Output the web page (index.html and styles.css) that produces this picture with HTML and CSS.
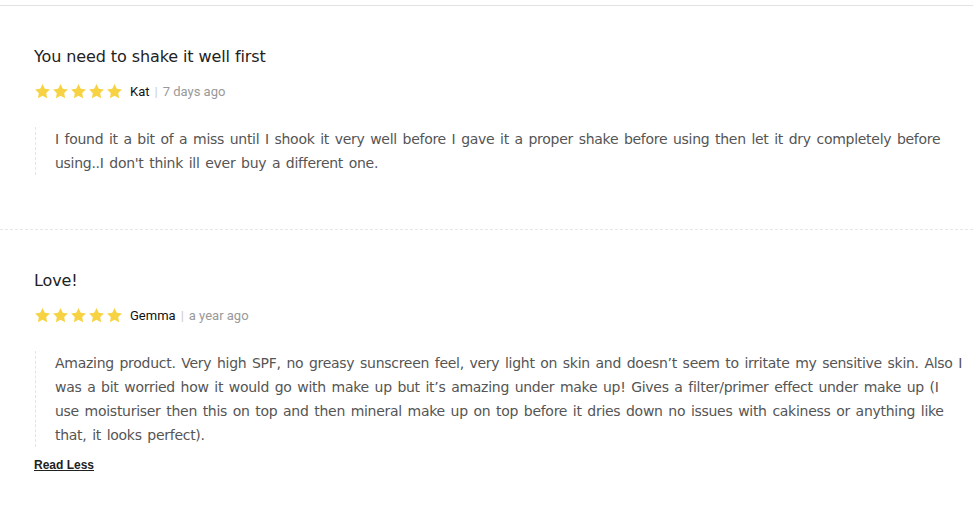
FILE: index.html
```
<!DOCTYPE html>
<html>
<head>
<meta charset="utf-8">
<link rel="stylesheet" href="styles.css">
</head>
<body>
<div class="topline"></div>
<div class="reviews">
  <div class="review">
    <div class="title">You need to shake it well first</div>
    <div class="meta">
      <div class="stars">
        <svg viewBox="0 0 24 24"><polygon points="12,1.5 15.2,8 22.5,9 17.2,14.1 18.5,21.4 12,18 5.5,21.4 6.8,14.1 1.5,9 8.8,8"/></svg>
        <svg viewBox="0 0 24 24"><polygon points="12,1.5 15.2,8 22.5,9 17.2,14.1 18.5,21.4 12,18 5.5,21.4 6.8,14.1 1.5,9 8.8,8"/></svg>
        <svg viewBox="0 0 24 24"><polygon points="12,1.5 15.2,8 22.5,9 17.2,14.1 18.5,21.4 12,18 5.5,21.4 6.8,14.1 1.5,9 8.8,8"/></svg>
        <svg viewBox="0 0 24 24"><polygon points="12,1.5 15.2,8 22.5,9 17.2,14.1 18.5,21.4 12,18 5.5,21.4 6.8,14.1 1.5,9 8.8,8"/></svg>
        <svg viewBox="0 0 24 24"><polygon points="12,1.5 15.2,8 22.5,9 17.2,14.1 18.5,21.4 12,18 5.5,21.4 6.8,14.1 1.5,9 8.8,8"/></svg>
      </div>
      <span class="name">Kat</span>
      <span class="sep">|</span>
      <span class="date">7 days ago</span>
    </div>
    <div class="body">I found it a bit of a miss until I shook it very well before I gave it a proper shake before using then let it dry completely before using..I don't think ill ever buy a different one.</div>
  </div>
  <div class="review">
    <div class="title">Love!</div>
    <div class="meta">
      <div class="stars">
        <svg viewBox="0 0 24 24"><polygon points="12,1.5 15.2,8 22.5,9 17.2,14.1 18.5,21.4 12,18 5.5,21.4 6.8,14.1 1.5,9 8.8,8"/></svg>
        <svg viewBox="0 0 24 24"><polygon points="12,1.5 15.2,8 22.5,9 17.2,14.1 18.5,21.4 12,18 5.5,21.4 6.8,14.1 1.5,9 8.8,8"/></svg>
        <svg viewBox="0 0 24 24"><polygon points="12,1.5 15.2,8 22.5,9 17.2,14.1 18.5,21.4 12,18 5.5,21.4 6.8,14.1 1.5,9 8.8,8"/></svg>
        <svg viewBox="0 0 24 24"><polygon points="12,1.5 15.2,8 22.5,9 17.2,14.1 18.5,21.4 12,18 5.5,21.4 6.8,14.1 1.5,9 8.8,8"/></svg>
        <svg viewBox="0 0 24 24"><polygon points="12,1.5 15.2,8 22.5,9 17.2,14.1 18.5,21.4 12,18 5.5,21.4 6.8,14.1 1.5,9 8.8,8"/></svg>
      </div>
      <span class="name">Gemma</span>
      <span class="sep">|</span>
      <span class="date">a year ago</span>
    </div>
    <div class="body">Amazing product. Very high SPF, no greasy sunscreen feel, very light on skin and doesn’t seem to irritate my sensitive skin. Also I was a bit worried how it would go with make up but it’s amazing under make up! Gives a filter/primer effect under make up (I use moisturiser then this on top and then mineral make up on top before it dries down no issues with cakiness or anything like that, it looks perfect).</div>
    <a class="readless" href="#">Read Less</a>
  </div>
</div>
</body>
</html>
```
FILE: styles.css
```
html, body {
  margin: 0;
  padding: 0;
  background: #fff;
}
body {
  width: 973px;
  overflow: hidden;
}
.topline {
  margin-top: 5px;
  height: 1px;
  background: #e2e2e2;
}
.reviews {
  display: flex;
  flex-direction: column;
}
.review {
  padding: 40px 8px 54px 34px;
}
.review + .review {
  border-top: 1px dashed #e6e6e6;
  padding-bottom: 40px;
}
.title {
  font-family: "DejaVu Sans", sans-serif;
  font-size: 16px;
  letter-spacing: -0.1px;
  line-height: 22px;
  color: #222;
}
.meta {
  margin-top: 14px;
  height: 18px;
  display: flex;
  align-items: center;
  font-family: Roboto, "Liberation Sans", sans-serif;
  font-size: 13px;
}
.stars {
  display: flex;
  gap: 1px;
  margin-right: 7px;
}
.stars svg {
  width: 17px;
  height: 17px;
  fill: #f7d242;
}
.name {
  color: #111;
}
.sep {
  color: #ccc;
  margin: 0 5px;
}
.date {
  color: #999;
}
.body {
  margin-top: 27px;
  margin-left: 1px;
  border-left: 1px dashed #e4e4e4;
  padding-left: 19px;
  font-family: "DejaVu Sans", sans-serif;
  font-size: 14px;
  letter-spacing: -0.28px;
  word-spacing: 1.5px;
  line-height: 24px;
  color: #555;
}
.readless {
  display: inline-block;
  margin-top: 11px;
  font-family: "Liberation Sans", Arial, sans-serif;
  font-size: 12px;
  font-weight: bold;
  color: #222;
  text-decoration: underline;
}
```
